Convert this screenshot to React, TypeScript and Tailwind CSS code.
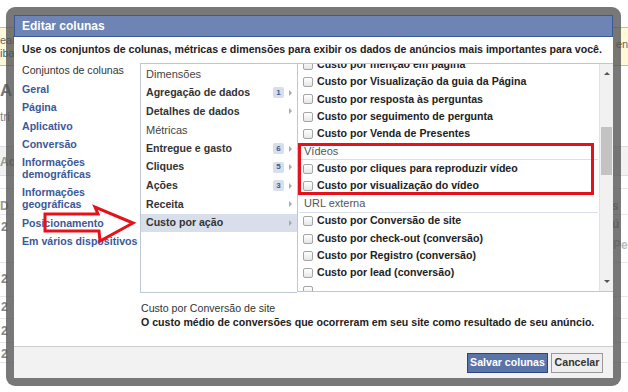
import React from "react";

type MidRow = { label: string; head?: boolean; badge?: string; arrow?: boolean; selected?: boolean };
type ListRow = { label: string; head?: boolean };

const sets: string[][] = [
  ["Geral"],
  ["Página"],
  ["Aplicativo"],
  ["Conversão"],
  ["Informações", "demográficas"],
  ["Informações", "geográficas"],
  ["Posicionamento"],
  ["Em vários dispositivos"],
];

const groups: MidRow[] = [
  { label: "Dimensões", head: true },
  { label: "Agregação de dados", badge: "1", arrow: true },
  { label: "Detalhes de dados", arrow: true },
  { label: "Métricas", head: true },
  { label: "Entregue e gasto", badge: "6", arrow: true },
  { label: "Cliques", badge: "5", arrow: true },
  { label: "Ações", badge: "3", arrow: true },
  { label: "Receita", arrow: true },
  { label: "Custo por ação", arrow: true, selected: true },
];

const metrics: ListRow[] = [
  { label: "Custo por menção em página" },
  { label: "Custo por Visualização da guia da Página" },
  { label: "Custo por resposta às perguntas" },
  { label: "Custo por seguimento de pergunta" },
  { label: "Custo por Venda de Presentes" },
  { label: "Vídeos", head: true },
  { label: "Custo por cliques para reproduzir vídeo" },
  { label: "Custo por visualização do vídeo" },
  { label: "URL externa", head: true },
  { label: "Custo por Conversão de site" },
  { label: "Custo por check-out (conversão)" },
  { label: "Custo por Registro (conversão)" },
  { label: "Custo por lead (conversão)" },
  { label: "" },
];

function Checkbox() {
  return (
    <span className="h-[10px] w-[10px] shrink-0 rounded-[2px] border border-[#a5a5a5] bg-gradient-to-b from-white to-[#e6e6e6]" />
  );
}

function Backdrop() {
  return (
    <div className="absolute inset-0 text-[#555]">
      <div className="absolute left-0 right-0 top-[27px] h-[39px] border-y border-[#e2c822] bg-[#fff9d7]" />
      <div className="absolute left-0 top-[34px] text-[11px] leading-[12px] text-[#666]">eal</div>
      <div className="absolute left-0 top-[47px] text-[11px] leading-[12px] text-[#3b5998]">iba</div>
      <div className="absolute left-[616px] top-[36px] text-[11px] text-[#666]">en</div>
      <div className="absolute left-0 top-[78px] text-[17px] font-bold text-[#777]">A</div>
      <div className="absolute left-0 top-[108px] text-[12px] text-[#888]">tri</div>
      <div className="absolute left-0 right-0 top-[146px] h-[30px] border-y border-[#ddd] bg-[#f2f2f2]" />
      <div className="absolute left-0 top-[153px] text-[12px] font-bold text-[#999]">Ad</div>
      <div className="absolute left-0 top-[197px] text-[12px] font-bold text-[#999]">D</div>
      <div className="absolute left-[612px] top-[197px] text-[12px] font-bold text-[#999]">s ú</div>
      <div className="absolute left-[613px] top-[236px] text-[12px] font-bold text-[#bbb]">Pe</div>
      {[188, 214, 262, 296, 318, 342, 362].map((y) => (
        <div key={y} className="absolute left-0 right-0 h-px bg-[#e6e6e6]" style={{ top: y }} />
      ))}
      {[218, 270, 298, 322, 345].map((y) => (
        <div key={y} className="absolute left-[1px] text-[12px] font-bold text-[#888]" style={{ top: y }}>
          2
        </div>
      ))}
    </div>
  );
}

export default function App() {
  return (
    <div className="relative h-[392px] w-[628px] overflow-hidden bg-white font-['Liberation_Sans',Arial,sans-serif] text-[#333]">
      <Backdrop />

      <div className="absolute left-[6px] top-[7px] h-[379px] w-[615px] rounded-[9px] bg-[rgba(82,82,82,0.78)] p-[8px]">
        <div className="flex h-full flex-col bg-white">
          <div className="flex h-[22px] shrink-0 items-center border border-[#3b5998] bg-[#6d84b4] px-[7px] text-[12px] font-bold text-white">
            Editar colunas
          </div>

          <div className="flex h-[26px] shrink-0 items-center px-[8px] text-[10.6px] font-bold text-[#222]">
            Use os conjuntos de colunas, métricas e dimensões para exibir os dados de anúncios mais importantes para você.
          </div>

          <div className="flex h-[230px] shrink-0 pl-[8px]">
            <div className="flex w-[118px] shrink-0 flex-col pt-[1px]">
              <div className="text-[10.6px] leading-[13px] text-[#333]">Conjuntos de colunas</div>
              <div className="mt-[6px] flex flex-col gap-[6.3px]">
                {sets.map((lines) => (
                  <div key={lines.join()} className="text-[10.6px] font-bold leading-[12px] text-[#3b5998]">
                    {lines.map((l) => (
                      <div key={l}>{l}</div>
                    ))}
                  </div>
                ))}
              </div>
            </div>

            <div className="flex w-[157px] shrink-0 flex-col border border-r-0 border-[#bdc7d8] pt-px">
              {groups.map((g) =>
                g.head ? (
                  <div key={g.label} className="flex h-[18.6px] items-center px-[5px] text-[11px] text-[#444]">
                    {g.label}
                  </div>
                ) : (
                  <div
                    key={g.label}
                    className={`flex h-[18.6px] items-center px-[5px] text-[10.6px] font-bold text-[#333] ${g.selected ? "bg-[#d8dfea]" : ""}`}
                  >
                    <span className="flex-1">{g.label}</span>
                    {g.badge && (
                      <span className="mr-[5px] flex h-[11px] w-[11px] items-center justify-center rounded-[2px] bg-[#d8dfea] text-[8px] font-bold text-[#3b5998]">
                        {g.badge}
                      </span>
                    )}
                    <span className="h-0 w-0 border-y-[3px] border-l-[3px] border-y-transparent border-l-[#aaa]" />
                  </div>
                )
              )}
            </div>

            <div className="relative mb-px flex flex-1 border-y border-l border-[#bdc7d8]">
              <div className="flex-1 overflow-hidden">
                <div className="-mt-[8px] flex flex-col">
                  {metrics.map((m, i) =>
                    m.head ? (
                      <div
                        key={i}
                        className="mx-[1px] flex h-[17.4px] items-center border-b border-[#d8dfea] px-[5px] text-[11px] text-[#555]"
                      >
                        {m.label}
                      </div>
                    ) : (
                      <div key={i} className="flex h-[17.4px] items-center gap-[4px] px-[5px] text-[10.6px] font-bold text-[#222]">
                        <Checkbox />
                        <span>{m.label}</span>
                      </div>
                    )
                  )}
                </div>
              </div>

              <div className="relative w-[14px] shrink-0 border-l border-[#e3e3e3] bg-[#f1f1f1]">
                <span className="absolute left-[4px] top-[8px] h-0 w-0 border-x-[3px] border-b-[3px] border-x-transparent border-b-[#555]" />
                <div className="absolute left-[1px] right-[1px] top-[63px] h-[48px] bg-[#c3c3c3]" />
                <span className="absolute bottom-[8px] left-[4px] h-0 w-0 border-x-[3px] border-t-[3px] border-x-transparent border-t-[#555]" />
              </div>

              <div className="pointer-events-none absolute left-0 top-[79px] h-[52px] w-[296px] border-[3px] border-[#e5121b]" />
            </div>
          </div>

          <div className="flex-1 pl-[127px] pt-[8px] text-[10.6px] leading-[14px]">
            <div className="text-[#333]">Custo por Conversão de site</div>
            <div className="font-bold text-[#222]">
              O custo médio de conversões que ocorreram em seu site como resultado de seu anúncio.
            </div>
          </div>

          <div className="flex h-[32px] shrink-0 items-center justify-end gap-[3px] border-t border-[#ccc] bg-[#f2f2f2] pr-[10px]">
            <button className="h-[20px] w-[81px] border border-[#29447e] bg-[#5b74a8] text-[10.6px] font-bold text-white">
              Salvar colunas
            </button>
            <button className="h-[20px] w-[52px] border border-[#999] bg-[#eee] text-[10.6px] font-bold text-[#333]">
              Cancelar
            </button>
          </div>
        </div>
      </div>

      <svg className="pointer-events-none absolute left-0 top-0" width="628" height="392">
        <polygon
          points="45,214 98,214 95,207 133,223 100,241 99,231 45,231"
          fill="none"
          stroke="#e5121b"
          strokeWidth="3"
          strokeLinejoin="miter"
        />
      </svg>
    </div>
  );
}
